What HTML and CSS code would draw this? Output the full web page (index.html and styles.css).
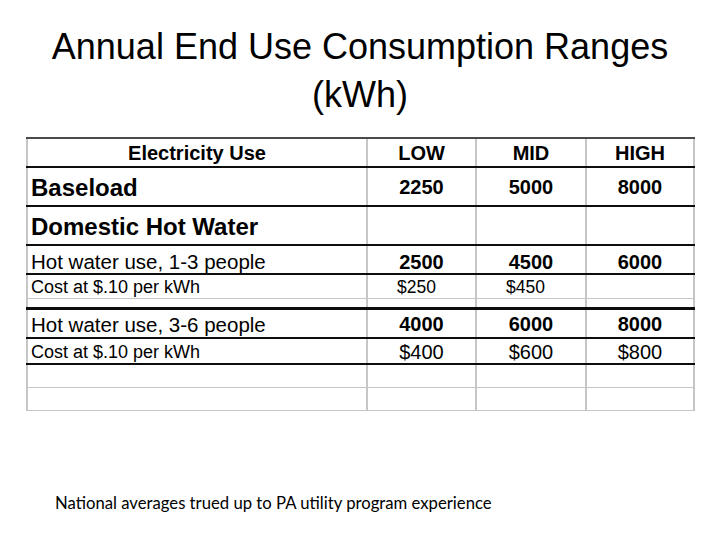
FILE: index.html
```html
<!DOCTYPE html>
<html>
<head>
<meta charset="utf-8">
<link rel="stylesheet" href="styles.css">
</head>
<body>
<h1 class="title">Annual End Use Consumption Ranges<br>(kWh)</h1>
<div class="table">
  <div class="row r-head">
    <div class="cell c1 center">Electricity Use</div>
    <div class="cell c2 center">LOW</div>
    <div class="cell c3 center">MID</div>
    <div class="cell c4 center">HIGH</div>
  </div>
  <div class="row r-big">
    <div class="cell c1 label-big">Baseload</div>
    <div class="cell c2 center num-b">2250</div>
    <div class="cell c3 center num-b">5000</div>
    <div class="cell c4 center num-b">8000</div>
  </div>
  <div class="row r-big">
    <div class="cell c1 label-big">Domestic Hot Water</div>
    <div class="cell c2"></div>
    <div class="cell c3"></div>
    <div class="cell c4"></div>
  </div>
  <div class="row r-hw">
    <div class="cell c1 label-hw">Hot water use, 1-3 people</div>
    <div class="cell c2 center num-b">2500</div>
    <div class="cell c3 center num-b">4500</div>
    <div class="cell c4 center num-b">6000</div>
  </div>
  <div class="row r-cost1">
    <div class="cell c1 label-cost">Cost at $.10 per kWh</div>
    <div class="cell c2 left num-s">$250</div>
    <div class="cell c3 left num-s">$450</div>
    <div class="cell c4"></div>
  </div>
  <div class="row r-spacer">
    <div class="cell c1"></div>
    <div class="cell c2"></div>
    <div class="cell c3"></div>
    <div class="cell c4"></div>
  </div>
  <div class="row r-hw2">
    <div class="cell c1 label-hw">Hot water use, 3-6 people</div>
    <div class="cell c2 center num-b">4000</div>
    <div class="cell c3 center num-b">6000</div>
    <div class="cell c4 center num-b">8000</div>
  </div>
  <div class="row r-cost2">
    <div class="cell c1 label-cost">Cost at $.10 per kWh</div>
    <div class="cell c2 center num-r">$400</div>
    <div class="cell c3 center num-r">$600</div>
    <div class="cell c4 center num-r">$800</div>
  </div>
  <div class="row r-empty">
    <div class="cell c1"></div>
    <div class="cell c2"></div>
    <div class="cell c3"></div>
    <div class="cell c4"></div>
  </div>
  <div class="row r-empty">
    <div class="cell c1"></div>
    <div class="cell c2"></div>
    <div class="cell c3"></div>
    <div class="cell c4"></div>
  </div>
</div>
<p class="note">National averages trued up to PA utility program experience</p>
</body>
</html>
```
FILE: styles.css
```css
html, body {
  margin: 0;
  padding: 0;
  background: #ffffff;
}
body {
  width: 720px;
  height: 540px;
  overflow: hidden;
  font-family: "Liberation Sans", Arial, sans-serif;
  color: #000;
}
.title {
  margin: 0;
  padding-top: 23px;
  font-weight: normal;
  font-size: 36px;
  line-height: 48px;
  text-align: center;
}
.table {
  margin-top: 18px;
  margin-left: 26px;
  width: 669px;
  border-top: 2px solid #4a4a4a;
}
.row {
  display: flex;
  box-sizing: border-box;
  border-bottom: 2px solid #0d0d0d;
}
.cell {
  box-sizing: border-box;
  display: flex;
  align-items: center;
  border-right: 2px solid #c6c6c6;
  padding-top: 2px;
  white-space: nowrap;
}
.c1 { width: 342px; border-left: 2px solid #c6c6c6; padding-left: 3px; }
.c2 { width: 109px; }
.c3 { width: 110px; }
.c4 { width: 108px; }
.center { justify-content: center; }
.c1.center { padding-left: 0; }
.left { justify-content: flex-start; padding-left: 29px; }

.r-head { height: 29px; font-weight: bold; font-size: 20px; }
.r-big { height: 39px; }
.r-hw { height: 29px; }
.r-hw .cell { padding-top: 5px; }
.r-cost1 { height: 24px; border-bottom: 1px solid #c6c6c6; }
.r-spacer { height: 11px; border-bottom: 3px solid #0d0d0d; }
.r-hw2 { height: 29px; }
.r-cost2 { height: 26px; }
.r-empty { height: 23px; border-bottom: 1px solid #c6c6c6; }

.label-big { font-weight: bold; font-size: 24px; }
.label-hw { font-size: 20.5px; }
.label-cost { font-size: 18px; }
.num-b { font-weight: bold; font-size: 20px; }
.num-s { font-size: 17.5px; }
.num-r { font-size: 20px; }

.note {
  margin: 82px 0 0 0;
  padding-left: 55px;
  font-family: Lato, "Open Sans", sans-serif;
  font-size: 16.7px;
  line-height: 20px;
  color: #000;
}
```
